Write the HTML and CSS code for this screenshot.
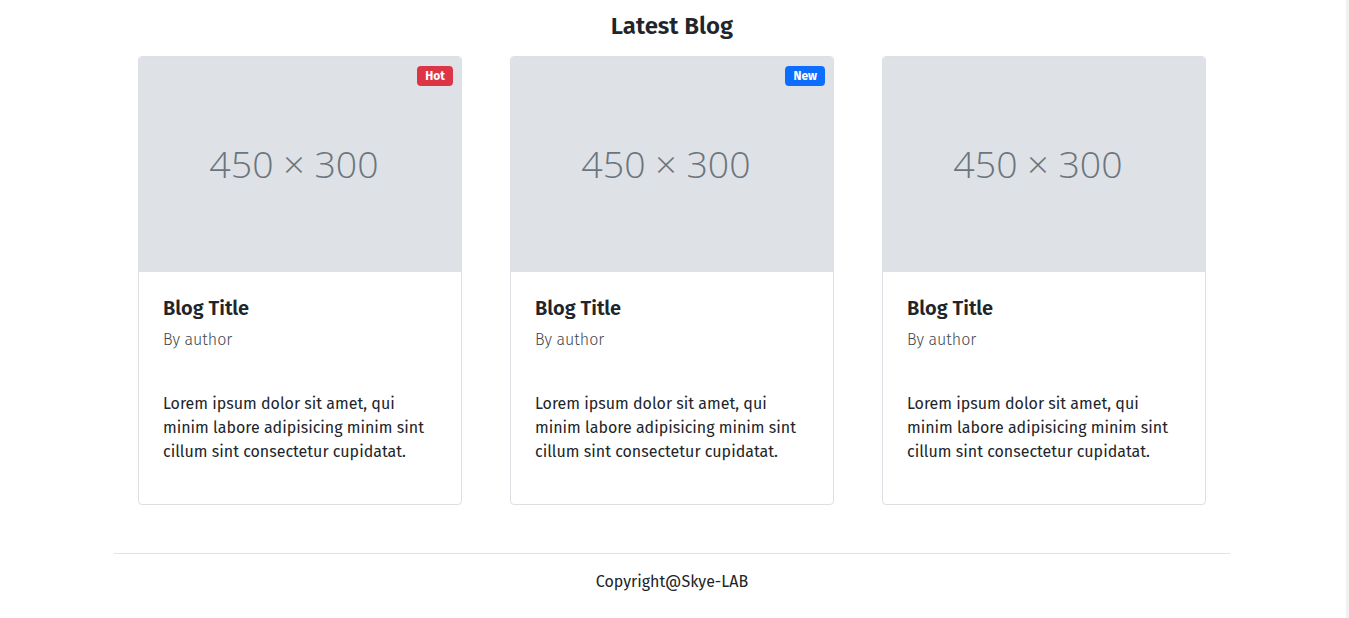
FILE: index.html
```html
<!DOCTYPE html>
<html lang="en">
<head>
<meta charset="utf-8">
<title>Latest Blog</title>
<link rel="stylesheet" href="styles.css">
</head>
<body>
<main class="container">
  <h2 class="section-title">Latest Blog</h2>
  <div class="row">
    <div class="col">
      <article class="card">
        <div class="card-img">
          <span class="placeholder-text">450 × 300</span>
          <span class="badge badge-hot">Hot</span>
        </div>
        <div class="card-body">
          <h5 class="card-title">Blog Title</h5>
          <p class="card-author">By author</p>
          <p class="card-text">Lorem ipsum dolor sit amet, qui minim labore adipisicing minim sint cillum sint consectetur cupidatat.</p>
        </div>
      </article>
    </div>
    <div class="col">
      <article class="card">
        <div class="card-img">
          <span class="placeholder-text">450 × 300</span>
          <span class="badge badge-new">New</span>
        </div>
        <div class="card-body">
          <h5 class="card-title">Blog Title</h5>
          <p class="card-author">By author</p>
          <p class="card-text">Lorem ipsum dolor sit amet, qui minim labore adipisicing minim sint cillum sint consectetur cupidatat.</p>
        </div>
      </article>
    </div>
    <div class="col">
      <article class="card">
        <div class="card-img">
          <span class="placeholder-text">450 × 300</span>
        </div>
        <div class="card-body">
          <h5 class="card-title">Blog Title</h5>
          <p class="card-author">By author</p>
          <p class="card-text">Lorem ipsum dolor sit amet, qui minim labore adipisicing minim sint cillum sint consectetur cupidatat.</p>
        </div>
      </article>
    </div>
  </div>
  <footer class="footer">
    <p class="copyright">Copyright@Skye-LAB</p>
  </footer>
</main>
<div class="scroll-track"></div>
</body>
</html>
```

FILE: styles.css
```css
* { box-sizing: border-box; }
html, body { margin: 0; padding: 0; }
body {
  font-family: "Fira Sans", Roboto, "Liberation Sans", sans-serif;
  font-size: 16px;
  line-height: 1.5;
  color: #212529;
  background: #fff;
  padding-right: 5px;
}
.container {
  width: 1116px;
  margin: 0 auto;
}
.section-title {
  margin: 0;
  padding-top: 12px;
  font-size: 24px;
  line-height: 29px;
  font-weight: 600;
  text-align: center;
  color: #212529;
  margin-bottom: 15px;
}
.row {
  display: grid;
  grid-template-columns: repeat(3, 1fr);
}
.col {
  padding: 0 24px;
}
.card {
  border: 1px solid #dcdfe3;
  border-radius: 4px;
  overflow: hidden;
  background: #fff;
}
.card-img {
  position: relative;
  height: 215px;
  background: #dee2e6;
  display: flex;
  align-items: center;
  justify-content: center;
}
.placeholder-text {
  font-family: "Open Sans", "Noto Sans", sans-serif;
  font-size: 37.5px;
  font-weight: 300;
  color: #6c757d;
  margin-right: 12px;
}
.badge {
  position: absolute;
  top: 9px;
  right: 8px;
  color: #fff;
  font-size: 12px;
  font-weight: 700;
  line-height: 20px;
  padding: 0 8px;
  border-radius: 4px;
}
.badge-hot { background: #dc3545; }
.badge-new { background: #0d6efd; }
.card-body {
  padding: 24px;
}
.card-title {
  margin: 0 0 8px;
  font-size: 20px;
  line-height: 24px;
  font-weight: 600;
}
.card-author {
  margin: 0 0 40px;
  font-weight: 300;
  color: #3d4650;
}
.card-text {
  margin: 0 0 16px;
}
.footer {
  margin-top: 48px;
  border-top: 1px solid #dee2e6;
  text-align: center;
}
.copyright {
  margin: 0;
  padding-top: 16px;
  padding-bottom: 24px;
}
.scroll-track {
  position: fixed;
  top: 0;
  right: 0;
  bottom: 0;
  width: 3px;
  background: #f1f1f1;
}
```
